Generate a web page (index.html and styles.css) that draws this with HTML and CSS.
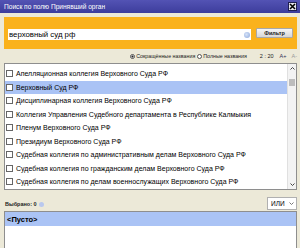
FILE: index.html
```html
<!DOCTYPE html>
<html lang="ru">
<head>
<meta charset="utf-8">
<link rel="stylesheet" href="styles.css">
</head>
<body>
<div class="window">
  <div class="titlebar">
    <span class="title">Поиск по полю Принявший орган</span>
    <span class="close"><svg width="7" height="7" viewBox="0 0 7 7"><path d="M1 1L6 6M6 1L1 6" stroke="#000" stroke-width="1.6"/></svg></span>
  </div>
  <div class="content">
    <div class="search">
      <div class="input"><span class="query">верховный суд рф</span><span class="clear"></span></div>
      <div class="btn">Фильтр</div>
    </div>
    <div class="options">
      <span class="radio"><span class="dot on"></span>Сокращённые названия</span>
      <span class="radio second"><span class="dot"></span>Полные названия</span>
      <span class="count">2 : 20</span>
      <span class="font-btn">A+</span>
      <span class="font-btn dim">A-</span>
    </div>
    <div class="list">
      <ul class="items">
        <li><span class="cb"></span>Апелляционная коллегия Верховного Суда РФ</li>
        <li class="sel"><span class="cb"></span>Верховный Суд РФ</li>
        <li><span class="cb"></span>Дисциплинарная коллегия Верховного Суда РФ</li>
        <li><span class="cb"></span>Коллегия Управления Судебного департамента в Республике Калмыкия</li>
        <li><span class="cb"></span>Пленум Верховного Суда РФ</li>
        <li><span class="cb"></span>Президиум Верховного Суда РФ</li>
        <li><span class="cb"></span>Судебная коллегия по административным делам Верховного Суда РФ</li>
        <li><span class="cb"></span>Судебная коллегия по гражданским делам Верховного Суда РФ</li>
        <li><span class="cb"></span>Судебная коллегия по делам военнослужащих Верховного Суда РФ</li>
      </ul>
      <div class="vscroll">
        <span class="arrow"><svg width="5" height="3" viewBox="0 0 5 3"><path d="M0.5 2.5L2.5 0.5L4.5 2.5" fill="none" stroke="#444" stroke-width="1"/></svg></span>
        <span class="thumb"></span>
        <span class="track"></span>
        <span class="arrow"><svg width="5" height="3" viewBox="0 0 5 3"><path d="M0.5 0.5L2.5 2.5L4.5 0.5" fill="none" stroke="#444" stroke-width="1"/></svg></span>
      </div>
    </div>
    <div class="status">
      <span class="picked">Выбрано: 0 <span class="info"></span></span>
      <span class="select">ИЛИ<svg width="5" height="3" viewBox="0 0 5 3"><path d="M0.5 0.5L2.5 2.5L4.5 0.5" fill="none" stroke="#777" stroke-width="1"/></svg></span>
    </div>
    <div class="chosen">
      <div class="chosen-row">&lt;Пусто&gt;</div>
    </div>
  </div>
</div>
</body>
</html>
```
FILE: styles.css
```css
* { box-sizing: border-box; }
html, body { margin: 0; padding: 0; }
body { width: 300px; height: 248px; overflow: hidden; background: #ece9d8; font-family: "Liberation Sans", Arial, sans-serif; color: #000; }
.window { width: 300px; height: 248px; overflow: hidden; display: flex; flex-direction: column; }
.titlebar { height: 13px; flex: none; display: flex; align-items: center; justify-content: space-between; padding: 0 3px 0 4px; background: linear-gradient(#5353b4, #3d3d9c); color: #fff; font-size: 6.6px; }
.close { width: 9px; height: 9px; display: flex; align-items: center; justify-content: center; background: #e6e6ee; border: 1px solid #1e1e50; }
.content { flex: 1; display: flex; flex-direction: column; padding: 4px 3px 0 4px; min-height: 0; }
.search { height: 32px; flex: none; background: #fab21c; display: flex; align-items: flex-start; gap: 5px; padding: 12px 4px 0 4px; }
.input { width: 243px; height: 11px; background: #fff; display: flex; align-items: center; justify-content: space-between; padding: 0 1px 0 1px; font-size: 7.8px; }
.clear { width: 6px; height: 6px; border-radius: 50%; background: radial-gradient(circle at 40% 40%, #d8e4f8, #8aa6dc); }
.btn { width: 37px; height: 10px; margin-top: -1px; display: flex; align-items: center; justify-content: center; background: linear-gradient(#f6f6f6, #d6d6d6); border: 1px solid #a8a8a8; border-radius: 1px; font-size: 5.5px; font-weight: bold; color: #222; }
.options { height: 14px; flex: none; display: flex; align-items: center; justify-content: flex-end; font-size: 5.3px; color: #222; }
.radio { display: flex; align-items: center; gap: 1px; }
.radio.second { margin-left: 2px; }
.dot { width: 5px; height: 5px; border-radius: 50%; border: 1px solid #555; background: #fff; }
.dot.on { background: radial-gradient(circle, #222 40%, #fff 55%); }
.count { margin-left: 13px; font-size: 5.5px; }
.font-btn { margin-left: 6px; color: #335; font-size: 5.5px; }
.font-btn.dim { margin-left: 5px; color: #999; }
.list { height: 127px; flex: none; display: flex; background: #fff; border: 1px solid #8e8e8e; }
.items { flex: 1; list-style: none; margin: 0; padding: 3px 0 0 0; font-size: 7px; overflow: hidden; }
.items li { height: 13.5px; display: flex; align-items: center; gap: 3px; padding-left: 1px; white-space: nowrap; }
.items li.sel { background: #aac3f5; }
.cb { width: 7px; height: 7px; flex: none; border: 1px solid #666; background: #fff; }
.vscroll { width: 9px; flex: none; display: flex; flex-direction: column; align-items: center; background: #f3f3f3; border-left: 1px solid #e0e0e0; }
.arrow { height: 9px; display: flex; align-items: center; justify-content: center; }
.thumb { width: 6px; height: 7px; margin-top: 6px; background: #bdbdbd; }
.track { flex: 1; }
.status { height: 21px; flex: none; display: flex; align-items: flex-end; justify-content: space-between; padding: 0 0 1px 1px; }
.picked { font-size: 5.5px; font-weight: bold; color: #222; display: flex; align-items: center; gap: 2px; margin-bottom: 3px; }
.info { width: 5px; height: 5px; border-radius: 50%; background: #b9c8ee; }
.select { width: 30px; height: 13px; display: flex; align-items: center; justify-content: space-between; padding: 0 2px 0 3px; background: #fff; border: 1px solid #b0b0b0; font-size: 6.5px; }
.chosen { flex: 1; background: #fff; border: 1px solid #8e8e8e; border-bottom: none; }
.chosen-row { height: 14px; display: flex; align-items: center; padding-left: 2px; background: #aac3f5; font-size: 7.5px; font-weight: bold; }
```
